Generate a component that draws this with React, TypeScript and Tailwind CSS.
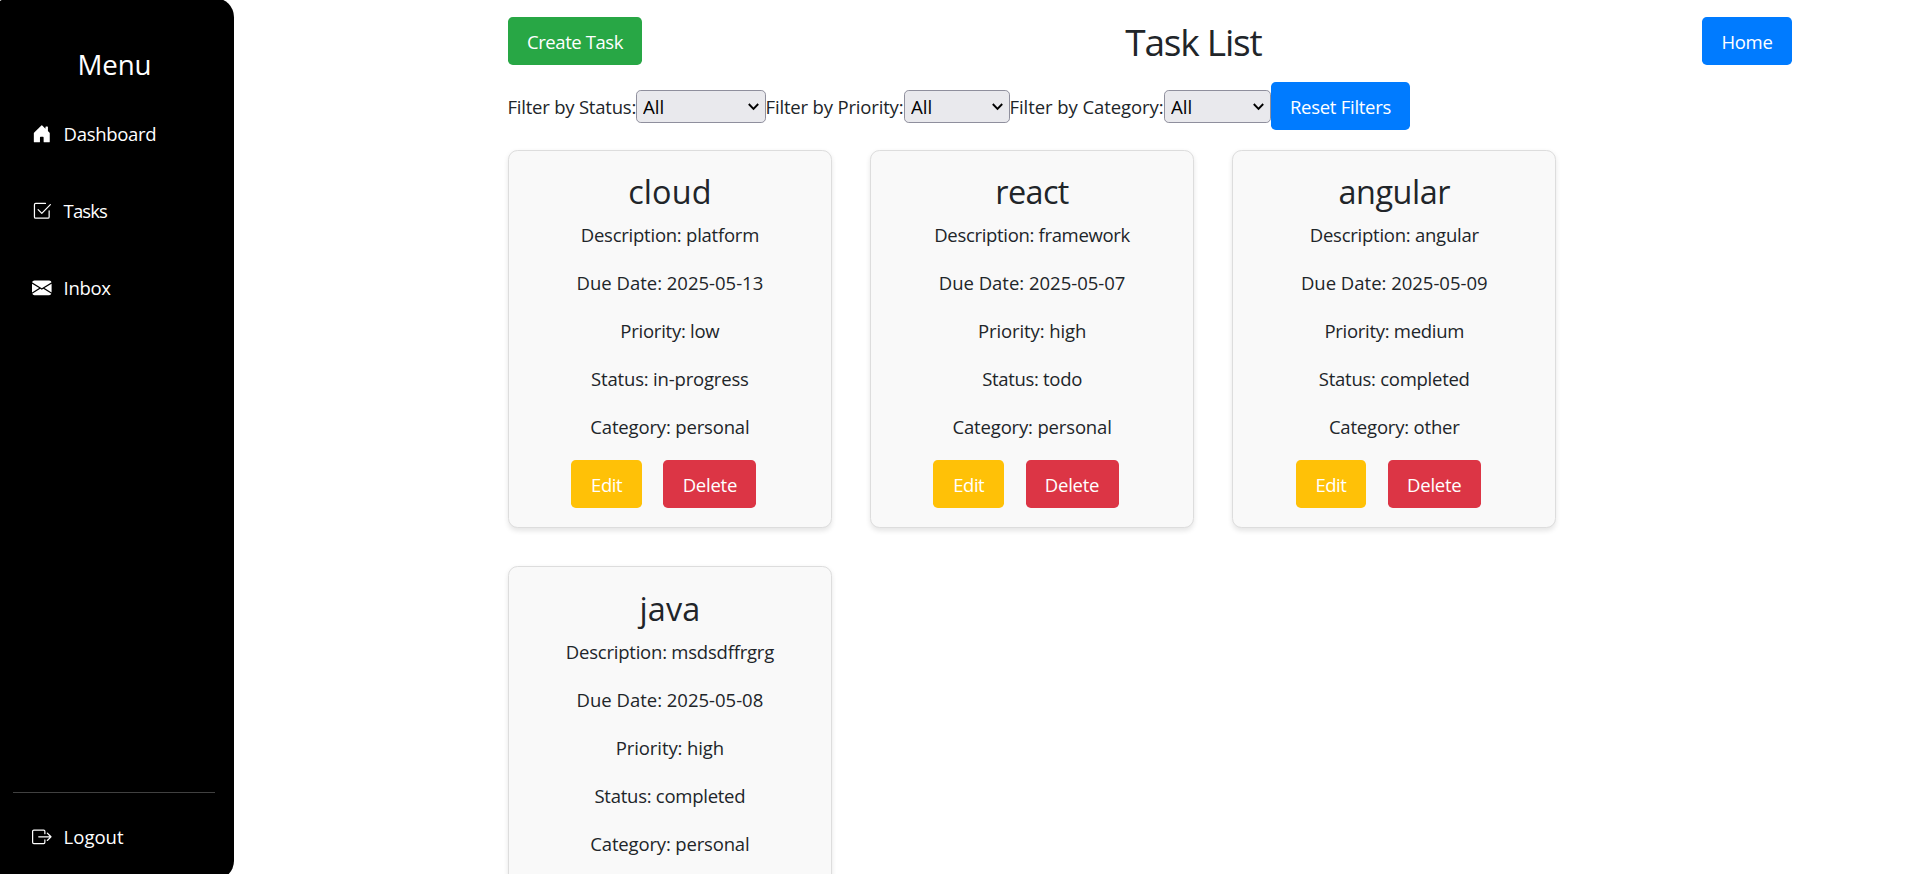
import type { ReactNode } from "react";
import { BsBoxArrowRight, BsCheck2Square, BsEnvelopeFill, BsHouseDoorFill } from "react-icons/bs";

type Line = { text: string; tracking: string };
type Task = { title: Line; lines: Line[] };

const tasks: Task[] = [
  {
    title: { text: "cloud", tracking: "tracking-[0.1px]" },
    lines: [
      { text: "Description: platform", tracking: "tracking-[-0.24px]" },
      { text: "Due Date: 2025-05-13", tracking: "tracking-[-0.01px]" },
      { text: "Priority: low", tracking: "tracking-[-0.25px]" },
      { text: "Status: in-progress", tracking: "tracking-[-0.18px]" },
      { text: "Category: personal", tracking: "tracking-[-0.16px]" },
    ],
  },
  {
    title: { text: "react", tracking: "tracking-[-0.6px]" },
    lines: [
      { text: "Description: framework", tracking: "tracking-[-0.32px]" },
      { text: "Due Date: 2025-05-07", tracking: "tracking-[-0.01px]" },
      { text: "Priority: high", tracking: "tracking-[-0.1px]" },
      { text: "Status: todo", tracking: "tracking-[-0.32px]" },
      { text: "Category: personal", tracking: "tracking-[-0.16px]" },
    ],
  },
  {
    title: { text: "angular", tracking: "tracking-[-0.42px]" },
    lines: [
      { text: "Description: angular", tracking: "tracking-[-0.25px]" },
      { text: "Due Date: 2025-05-09", tracking: "tracking-[-0.01px]" },
      { text: "Priority: medium", tracking: "tracking-[-0.29px]" },
      { text: "Status: completed", tracking: "tracking-[-0.26px]" },
      { text: "Category: other", tracking: "tracking-[-0.19px]" },
    ],
  },
  {
    title: { text: "java", tracking: "tracking-[0.1px]" },
    lines: [
      { text: "Description: msdsdffrgrg", tracking: "tracking-[-0.22px]" },
      { text: "Due Date: 2025-05-08", tracking: "tracking-[-0.01px]" },
      { text: "Priority: high", tracking: "tracking-[-0.1px]" },
      { text: "Status: completed", tracking: "tracking-[-0.26px]" },
      { text: "Category: personal", tracking: "tracking-[-0.16px]" },
    ],
  },
];

function Button({ className, children }: { className: string; children: ReactNode }) {
  return (
    <button
      className={`flex h-12 shrink-0 items-center justify-center whitespace-nowrap rounded-[4.8px] pt-[2px] text-white ${className}`}
    >
      {children}
    </button>
  );
}

function Filter({ label, labelClass, selectClass, options }: { label: string; labelClass: string; selectClass: string; options: string[] }) {
  return (
    <>
      <label className={`shrink-0 whitespace-nowrap pt-[2px] indent-[-0.5px] ${labelClass}`}>{label}</label>
      <div className={`relative h-[33px] shrink-0 ${selectClass}`}>
        <select className="block h-full w-full appearance-none rounded-[4.8px] border border-[#8f8f9d] bg-[#e9e9ed] pl-[6px] text-[18.7px] leading-[29px] text-black">
          <option>All</option>
          {options.map((o) => (
            <option key={o}>{o}</option>
          ))}
        </select>
        <svg className="pointer-events-none absolute right-[7px] top-[13px]" width="11" height="8" viewBox="0 0 11 8" fill="none" stroke="#000" strokeWidth="1.9">
          <path d="M0.8 1 5.5 5.8 10.2 1" />
        </svg>
      </div>
    </>
  );
}

function NavItem({ icon, label, className }: { icon: ReactNode; label: string; className: string }) {
  return (
    <a className={`flex h-[28.8px] items-center gap-3 pl-[32px] ${className}`}>
      <span className="text-[19.6px]">{icon}</span>
      <span>{label}</span>
    </a>
  );
}

function Card({ task }: { task: Task }) {
  return (
    <article className="flex flex-col items-center rounded-[9.6px] border border-[#ddd] bg-[#f9f9f9] pb-[19.2px] pt-[19.2px] shadow-[0_2.4px_4.8px_rgba(0,0,0,0.1)] [&:nth-child(n+4)]:pt-5">
      <h3 className={`mb-[8.6px] pt-px text-[32.4px] leading-[40.3px] ${task.title.tracking}`}>{task.title.text}</h3>
      {task.lines.map((l) => (
        <p key={l.text} className={`mb-[19.2px] whitespace-nowrap pt-[2px] leading-[26.8px] ${l.tracking}`}>
          {l.text}
        </p>
      ))}
      <div className="flex gap-[21.45px] pr-[12.25px]">
        <Button className="w-[70.8px] bg-[#ffc107] tracking-[-0.5px]">Edit</Button>
        <Button className="w-[93px] bg-[#dc3545] tracking-[-0.24px]">Delete</Button>
      </div>
    </article>
  );
}

export default function App() {
  return (
    <div className="flex h-[874px] w-full overflow-hidden bg-white font-['Open_Sans',sans-serif] text-[18.5px] text-[#212529]">
      <aside className="-ml-[9px] -mt-[2px] flex h-[882px] w-[243px] shrink-0 flex-col rounded-[19.2px] bg-black pl-[9px] text-white">
        <h2 className="mt-[49px] pr-[5px] text-center text-[27.7px] leading-[35px] tracking-[-0.1px]">Menu</h2>
        <nav className="mt-[37.7px] flex flex-col gap-[48.2px]">
          <NavItem icon={<BsHouseDoorFill />} label="Dashboard" className="tracking-[-0.31px]" />
          <NavItem icon={<BsCheck2Square />} label="Tasks" className="tracking-[-0.9px]" />
          <NavItem icon={<BsEnvelopeFill />} label="Inbox" className="tracking-[-0.3px]" />
        </nav>
        <div className="mb-[29px] ml-[13px] mr-[19px] mt-auto border-t border-[#404040] pt-[29px]">
          <NavItem icon={<BsBoxArrowRight />} label="Logout" className="-ml-[13px]" />
        </div>
      </aside>
      <main className="flex flex-1 flex-col pl-[274px] pr-[121px] pt-[17px]">
        <header className="flex h-12 items-center">
          <Button className="w-[134px] bg-[#28a745] tracking-[-0.43px]">Create Task</Button>
          <h1 className="ml-auto mr-[440.5px] whitespace-nowrap pt-[2px] text-[37px] leading-[46px] tracking-[-1.2px]">Task List</h1>
          <Button className="w-[90px] bg-[#007bff] tracking-[-0.37px]">Home</Button>
        </header>
        <div className="mt-[17px] flex h-12 items-center">
          <Filter label="Filter by Status:" labelClass="w-[128px] tracking-[-0.22px]" selectClass="w-[130px]" options={["To do", "In progress", "Completed"]} />
          <Filter label="Filter by Priority:" labelClass="w-[138px] tracking-[-0.17px]" selectClass="w-[106px]" options={["Low", "Medium", "High"]} />
          <Filter label="Filter by Category:" labelClass="w-[154px] tracking-[-0.07px]" selectClass="w-[107px]" options={["Work", "Personal", "Other"]} />
          <Button className="w-[139px] bg-[#007bff] tracking-[-0.27px]">Reset Filters</Button>
        </div>
        <section className="mt-5 grid grid-cols-[repeat(3,323.8px)] gap-x-[38.4px] gap-y-[38px]">
          {tasks.map((t) => (
            <Card key={t.title.text} task={t} />
          ))}
        </section>
      </main>
    </div>
  );
}
